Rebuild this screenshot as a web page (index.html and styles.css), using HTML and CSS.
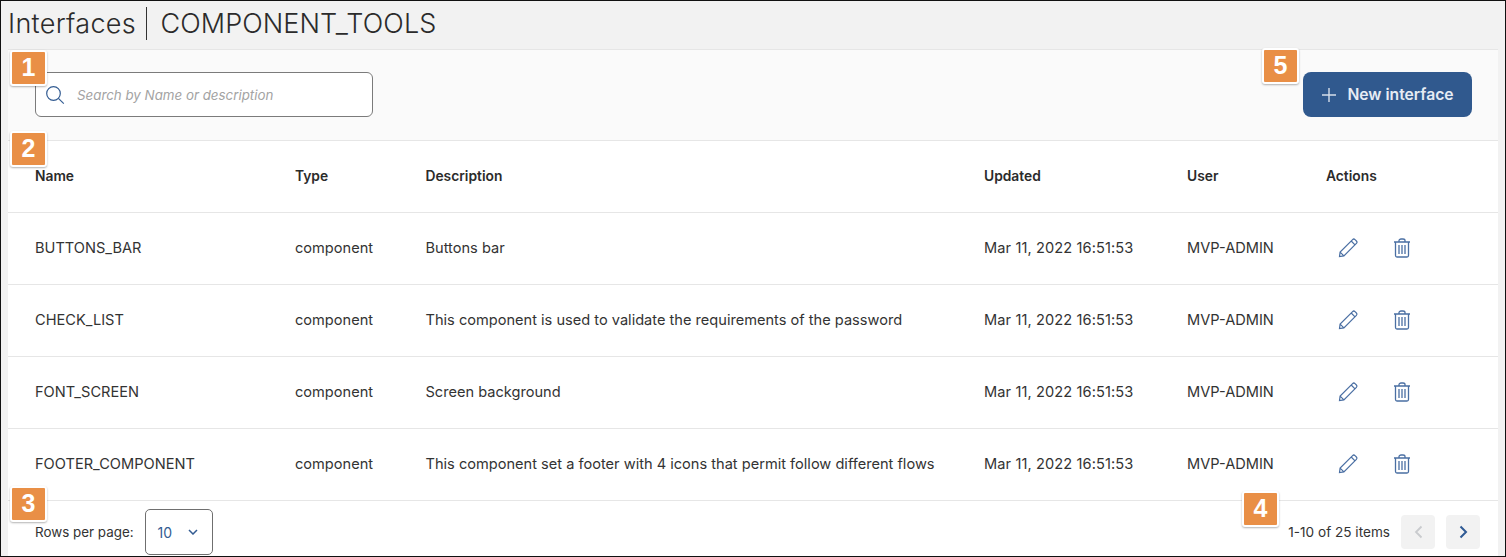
FILE: index.html
```html
<!DOCTYPE html>
<html lang="en">
<head>
<meta charset="UTF-8">
<title>Interfaces | COMPONENT_TOOLS</title>
<link rel="stylesheet" href="styles.css">
</head>
<body>
<div class="frame">
  <h1 class="title"><span class="title-main">Interfaces</span><i class="title-bar"></i><span class="title-sub">COMPONENT_TOOLS</span></h1>

  <div class="panel">
    <div class="toolbar">
      <div class="search">
        <svg class="search-icon" width="20" height="20" viewBox="0 0 20 20" fill="none" stroke="#335c92" stroke-width="1.2"><circle cx="8.5" cy="8.5" r="6.8"/><path d="M13.4 13.4l5.4 5.2"/></svg>
        <span class="search-hint">Search by Name or description</span>
      </div>
      <button class="new-btn">
        <svg width="16" height="16" viewBox="0 0 16 16" stroke="#d5deea" stroke-width="1.4"><path d="M8 1v14M1 8h14"/></svg>
        New interface
      </button>
    </div>

    <div class="row row-head">
      <div>Name</div><div>Type</div><div>Description</div><div>Updated</div><div>User</div><div>Actions</div>
    </div>

    <div class="row">
      <div>BUTTONS_BAR</div><div>component</div><div>Buttons bar</div><div class="date">Mar 11, 2022 16:51:53</div><div>MVP-ADMIN</div>
      <div class="actions">
        <svg class="pencil" width="22" height="22" viewBox="0 0 22 22" fill="none" stroke="#4a6fa3" stroke-width="1.2"><path d="M2.500 19.500l.6-4.400L15.600 2.600a1.700 1.700 0 0 1 2.400 0l1.400 1.400a1.700 1.700 0 0 1 0 2.400L6.900 18.900zM3.100 15.100l3.800 3.800M14.200 4l3.800 3.800"/></svg>
        <svg class="trash" width="18" height="20" viewBox="0 0 18 20" fill="none" stroke="#4a6fa3" stroke-width="1.3"><path d="M1 4h16M6 4V2.600C6 1.600 7 1 8 1h2c1 0 2 .6 2 1.600V4M2.500 4v13.500c0 .8.6 1.500 1.500 1.500h10c.9 0 1.500-.7 1.500-1.500V4M6 7v9M9 7v9M12 7v9"/></svg>
      </div>
    </div>
    <div class="row">
      <div>CHECK_LIST</div><div>component</div><div>This component is used to validate the requirements of the password</div><div class="date">Mar 11, 2022 16:51:53</div><div>MVP-ADMIN</div>
      <div class="actions">
        <svg class="pencil" width="22" height="22" viewBox="0 0 22 22" fill="none" stroke="#4a6fa3" stroke-width="1.2"><path d="M2.500 19.500l.6-4.400L15.600 2.600a1.700 1.700 0 0 1 2.400 0l1.400 1.400a1.700 1.700 0 0 1 0 2.400L6.900 18.900zM3.100 15.100l3.800 3.800M14.200 4l3.800 3.800"/></svg>
        <svg class="trash" width="18" height="20" viewBox="0 0 18 20" fill="none" stroke="#4a6fa3" stroke-width="1.3"><path d="M1 4h16M6 4V2.600C6 1.600 7 1 8 1h2c1 0 2 .6 2 1.600V4M2.500 4v13.500c0 .8.6 1.500 1.500 1.500h10c.9 0 1.500-.7 1.500-1.500V4M6 7v9M9 7v9M12 7v9"/></svg>
      </div>
    </div>
    <div class="row">
      <div>FONT_SCREEN</div><div>component</div><div>Screen background</div><div class="date">Mar 11, 2022 16:51:53</div><div>MVP-ADMIN</div>
      <div class="actions">
        <svg class="pencil" width="22" height="22" viewBox="0 0 22 22" fill="none" stroke="#4a6fa3" stroke-width="1.2"><path d="M2.500 19.500l.6-4.400L15.600 2.600a1.700 1.700 0 0 1 2.400 0l1.400 1.400a1.700 1.700 0 0 1 0 2.400L6.900 18.900zM3.100 15.100l3.800 3.800M14.200 4l3.800 3.800"/></svg>
        <svg class="trash" width="18" height="20" viewBox="0 0 18 20" fill="none" stroke="#4a6fa3" stroke-width="1.3"><path d="M1 4h16M6 4V2.600C6 1.600 7 1 8 1h2c1 0 2 .6 2 1.600V4M2.500 4v13.500c0 .8.6 1.500 1.500 1.500h10c.9 0 1.500-.7 1.500-1.500V4M6 7v9M9 7v9M12 7v9"/></svg>
      </div>
    </div>
    <div class="row">
      <div>FOOTER_COMPONENT</div><div>component</div><div>This component set a footer with 4 icons that permit follow different flows</div><div class="date">Mar 11, 2022 16:51:53</div><div>MVP-ADMIN</div>
      <div class="actions">
        <svg class="pencil" width="22" height="22" viewBox="0 0 22 22" fill="none" stroke="#4a6fa3" stroke-width="1.2"><path d="M2.500 19.500l.6-4.400L15.600 2.600a1.700 1.700 0 0 1 2.400 0l1.400 1.400a1.700 1.700 0 0 1 0 2.400L6.900 18.900zM3.100 15.100l3.800 3.800M14.200 4l3.800 3.800"/></svg>
        <svg class="trash" width="18" height="20" viewBox="0 0 18 20" fill="none" stroke="#4a6fa3" stroke-width="1.3"><path d="M1 4h16M6 4V2.600C6 1.600 7 1 8 1h2c1 0 2 .6 2 1.600V4M2.500 4v13.500c0 .8.6 1.500 1.500 1.500h10c.9 0 1.500-.7 1.500-1.500V4M6 7v9M9 7v9M12 7v9"/></svg>
      </div>
    </div>

    <div class="pager">
      <div class="rows-per-page">
        <span>Rows per page:</span>
        <div class="rows-select">
          <span>10</span>
          <svg width="10" height="6" viewBox="0 0 10 6" fill="none" stroke="#335c92" stroke-width="1.5"><path d="M1 1l4 4 4-4"/></svg>
        </div>
      </div>
      <div class="page-nav">
        <span class="page-count">1-10 of 25 items</span>
        <div class="page-btn"><svg width="9" height="14" viewBox="0 0 9 14" fill="none" stroke="#c9cbce" stroke-width="1.8"><path d="M7.500 1.500L2 7l5.500 5.500"/></svg></div>
        <div class="page-btn"><svg width="9" height="14" viewBox="0 0 9 14" fill="none" stroke="#2f5a94" stroke-width="2"><path d="M1.500 1.500L7 7l-5.500 5.500"/></svg></div>
      </div>
    </div>
  </div>

  <div class="badge badge-1">1</div>
  <div class="badge badge-2">2</div>
  <div class="badge badge-3">3</div>
  <div class="badge badge-4">4</div>
  <div class="badge badge-5">5</div>
</div>
</body>
</html>
```

FILE: styles.css
```css
* {
  box-sizing: border-box;
}

body {
  margin: 0;
  font-family: "Inter", "Liberation Sans", sans-serif;
  font-size: 14.6px;
  color: #333;
}

.frame {
  position: relative;
  width: 1506px;
  height: 557px;
  overflow: hidden;
  border: 1px solid #111;
  background-color: #f2f2f2;
}

.title {
  display: flex;
  align-items: center;
  height: 48px;
  margin: 0;
  padding: 0 0 3px 7px;
  font-size: 27px;
  font-weight: 300;
  color: #2b2b2b;
}

.title-main {
  letter-spacing: 0.3px;
}

.title-sub {
  letter-spacing: 0.07px;
}

.title-bar {
  width: 1.5px;
  height: 33px;
  margin: 0 13px 0 10px;
  background-color: #333;
}

.panel {
  width: 1490px;
  height: 507px;
  margin-left: 7px;
  background-color: white;
  border-top: 1px solid #e6e6e6;
}

.toolbar {
  display: flex;
  justify-content: space-between;
  align-items: flex-start;
  height: 91px;
  padding: 22px 26px 0 27px;
  background-color: #fafafa;
  border-bottom: 1px solid #e6e6e6;
}

.search {
  display: flex;
  align-items: center;
  width: 338px;
  height: 45px;
  padding-left: 9px;
  background-color: white;
  border: 1px solid #7b7b7b;
  border-radius: 6px;
}

.search-hint {
  margin-left: 12px;
  font-size: 13.33px;
  font-style: italic;
  color: #a3a3a3;
}

.new-btn {
  display: flex;
  align-items: center;
  justify-content: center;
  gap: 10px;
  width: 169px;
  height: 45px;
  background-color: #30598e;
  border: 0;
  border-radius: 8px;
  font-family: inherit;
  font-size: 15.7px;
  font-weight: 600;
  color: #e6ecf4;
}

.row {
  display: grid;
  grid-template-columns: 260px 130.5px 558.5px 203px 139px 1fr;
  align-items: center;
  height: 72px;
  padding: 0 0 2px 27px;
  border-bottom: 1px solid #e6e6e6;
}

.row-head {
  font-size: 13.8px;
  font-weight: 600;
  color: #2b2b2b;
}

.date {
  letter-spacing: 0.1px;
}

.actions {
  display: flex;
  align-items: center;
  gap: 34px;
  padding-left: 11px;
}

.pager {
  display: flex;
  justify-content: space-between;
  height: 55px;
  padding: 8px 18px 0 27px;
}

.rows-per-page {
  display: flex;
  align-items: flex-start;
  gap: 11px;
  font-size: 13.4px;
}

.rows-per-page > span {
  margin-top: 15px;
}

.rows-select {
  display: flex;
  align-items: center;
  gap: 16px;
  width: 68px;
  height: 46px;
  padding-left: 12px;
  border: 1px solid #6f6f6f;
  border-radius: 5px;
  font-size: 14px;
  color: #335c92;
}

.page-nav {
  display: flex;
  align-items: flex-start;
  font-size: 13.6px;
}

.page-count {
  margin-top: 15px;
  margin-right: 11px;
}

.page-btn {
  display: flex;
  align-items: center;
  justify-content: center;
  width: 34px;
  height: 34px;
  margin-right: 11px;
  margin-top: 6px;
  background-color: #f2f2f2;
  border-radius: 4px;
}

.page-btn:last-child {
  margin-right: 0;
}

.badge {
  position: absolute;
  display: flex;
  align-items: center;
  justify-content: center;
  width: 37px;
  height: 36px;
  padding-bottom: 2px;
  background-color: #e98f46;
  border: 2px solid white;
  border-radius: 3px;
  box-shadow: 0 1px 2px rgba(0, 0, 0, 0.3);
  font-family: "Liberation Sans", sans-serif;
  font-size: 25px;
  font-weight: 700;
  color: white;
}

.badge-1 { left: 9px; top: 49px; }
.badge-2 { left: 9px; top: 130px; }
.badge-3 { left: 9px; top: 485px; }
.badge-4 { left: 1241px; top: 490px; }
.badge-5 { left: 1261px; top: 47px; }
```
